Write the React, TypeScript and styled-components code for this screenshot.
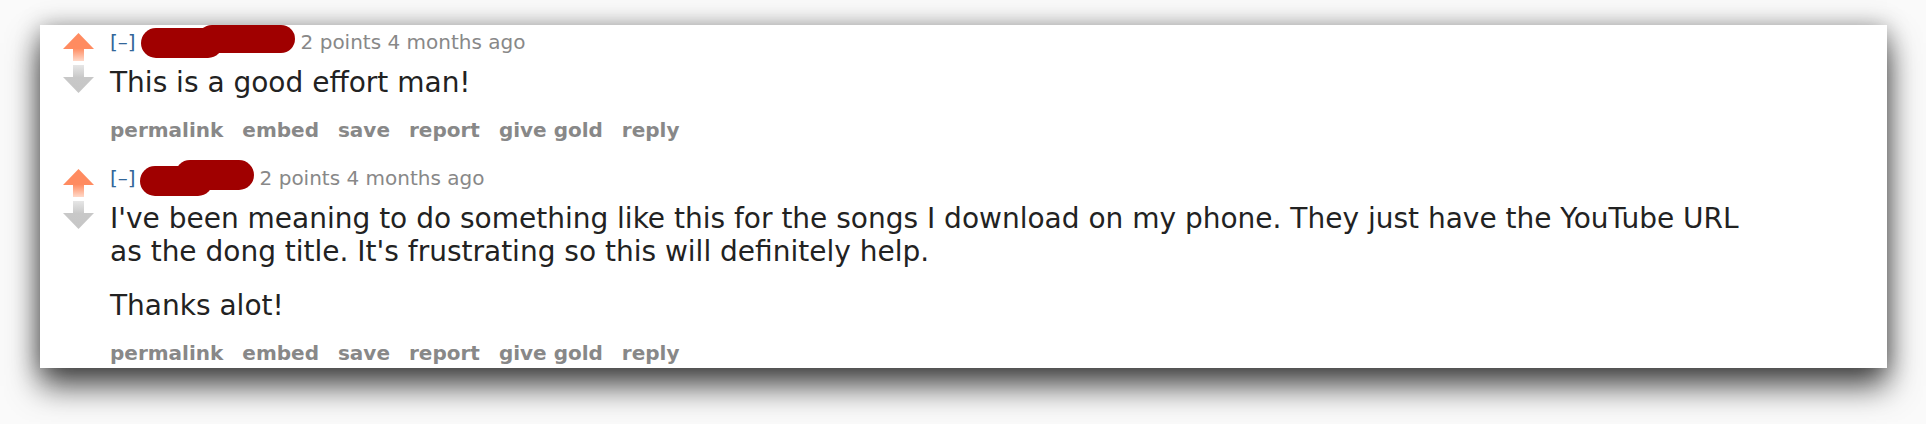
import styled, { createGlobalStyle } from "styled-components";

const GlobalStyle = createGlobalStyle`
  html, body {
    margin: 0;
    padding: 0;
    background: #fafafa;
  }
  body {
    font-family: "DejaVu Sans", Verdana, sans-serif;
  }
`;

const Page = styled.div`
  width: 1926px;
  height: 424px;
  padding: 25px 39px 0 40px;
  box-sizing: border-box;
  overflow: hidden;
`;

const Card = styled.div`
  background: #fff;
  height: 343px;
  box-sizing: border-box;
  padding: 5px 0 7px 23px;
  box-shadow: 0 18px 30px rgba(0, 0, 0, 0.7), 0 0 22px rgba(0, 0, 0, 0.28);
`;

const Comment = styled.div<{ $first?: boolean }>`
  display: flex;
  margin-top: ${(p) => (p.$first ? "0" : "24px")};
`;

const Votes = styled.div`
  display: flex;
  flex-direction: column;
  gap: 4px;
  width: 31px;
  margin-top: 3px;
  margin-right: 16px;
`;

const Entry = styled.div`
  display: flex;
  flex-direction: column;
`;

const Tagline = styled.div`
  display: flex;
  align-items: center;
  height: 24px;
  font-size: 20px;
  line-height: 24px;
  color: #888;
`;

const Expand = styled.span`
  color: #369;
  margin-right: 4px;
`;

const Redacted = styled.svg`
  flex: none;
  margin-right: 6px;
`;

const Body = styled.div`
  margin-top: 12px;
  max-width: 1640px;
  font-size: 28px;
  line-height: 33px;
  color: #222;

  p {
    margin: 0;
  }
  p + p {
    margin-top: 21px;
  }
`;

const Buttons = styled.ul`
  display: flex;
  gap: 19px;
  list-style: none;
  margin: 19px 0 0;
  padding: 0;
  font-size: 20px;
  line-height: 24px;
  font-weight: bold;
  color: #888;
`;

const UpArrow = () => (
  <svg width="31" height="28" viewBox="0 0 31 28">
    <defs>
      <linearGradient id="upg" x1="0" y1="0" x2="0" y2="1">
        <stop offset="0" stopColor="#ff8b60" />
        <stop offset="0.55" stopColor="#ff8b60" />
        <stop offset="1" stopColor="#ffd9c9" />
      </linearGradient>
    </defs>
    <polygon points="15.5,0 31,16 21,16 21,28 10,28 10,16 0,16" fill="url(#upg)" />
  </svg>
);

const DownArrow = () => (
  <svg width="31" height="28" viewBox="0 0 31 28">
    <defs>
      <linearGradient id="downg" x1="0" y1="0" x2="0" y2="1">
        <stop offset="0" stopColor="#e6e6e6" />
        <stop offset="0.45" stopColor="#c8c8c8" />
        <stop offset="1" stopColor="#c6c6c6" />
      </linearGradient>
    </defs>
    <polygon points="10,0 21,0 21,12 31,12 15.5,28 0,12 10,12" fill="url(#downg)" />
  </svg>
);

const actions = ["permalink", "embed", "save", "report", "give gold", "reply"];

type Stroke = [number, number, number, number, number];

const comments: {
  blob: { w: number; h: number; strokes: Stroke[] };
  paragraphs: string[];
}[] = [
  {
    blob: {
      w: 155,
      h: 34,
      strokes: [
        [16, 18, 68, 18, 30],
        [72, 14, 141, 14, 28],
      ],
    },
    paragraphs: ["This is a good effort man!"],
  },
  {
    blob: {
      w: 114,
      h: 36,
      strokes: [
        [15, 21, 58, 21, 30],
        [50, 15, 99, 15, 30],
      ],
    },
    paragraphs: [
      "I've been meaning to do something like this for the songs I download on my phone. They just have the YouTube URL as the dong title. It's frustrating so this will definitely help.",
      "Thanks alot!",
    ],
  },
];

const App = () => {
  return (
    <Page>
      <GlobalStyle />
      <Card>
        {comments.map((c, i) => (
          <Comment key={i} $first={i === 0}>
            <Votes>
              <UpArrow />
              <DownArrow />
            </Votes>
            <Entry>
              <Tagline>
                <Expand>[–]</Expand>
                <Redacted width={c.blob.w} height={c.blob.h} viewBox={`0 0 ${c.blob.w} ${c.blob.h}`}>
                  {c.blob.strokes.map(([x1, y1, x2, y2, sw], k) => (
                    <path
                      key={k}
                      d={`M${x1} ${y1} L${x2} ${y2}`}
                      stroke="#a00000"
                      strokeWidth={sw}
                      strokeLinecap="round"
                      fill="none"
                    />
                  ))}
                </Redacted>
                <span>2 points 4 months ago</span>
              </Tagline>
              <Body>
                {c.paragraphs.map((p, k) => (
                  <p key={k}>{p}</p>
                ))}
              </Body>
              <Buttons>
                {actions.map((a) => (
                  <li key={a}>{a}</li>
                ))}
              </Buttons>
            </Entry>
          </Comment>
        ))}
      </Card>
    </Page>
  );
};

export default App;
